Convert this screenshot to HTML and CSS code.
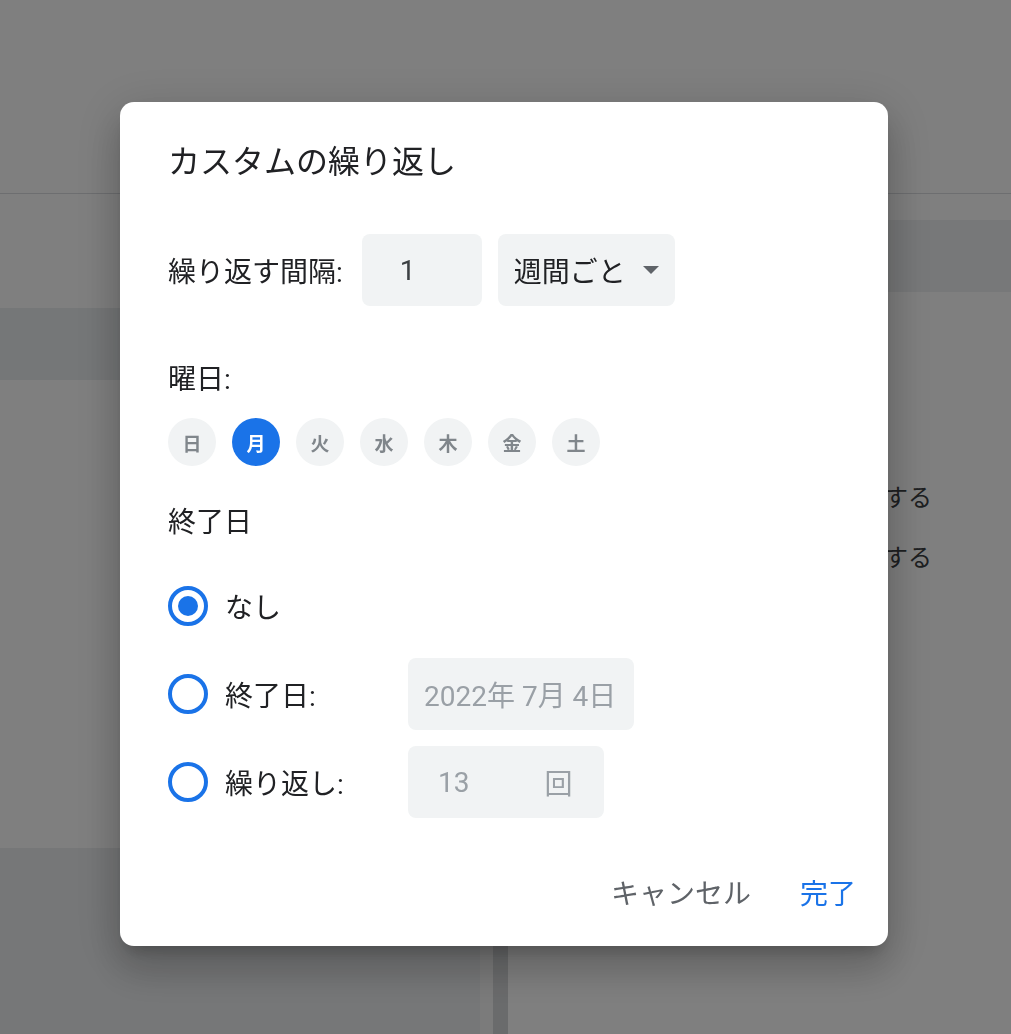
FILE: index.html
```html
<!DOCTYPE html>
<html lang="ja">
<head>
<meta charset="utf-8">
<title>カスタムの繰り返し</title>
<link rel="stylesheet" href="styles.css">
</head>
<body>
<div class="page">
  <header class="topbar"></header>
  <div class="main">
    <div class="left">
      <div class="left-band"></div>
      <div class="left-block"></div>
    </div>
    <div class="track-light"></div>
    <div class="track-dark"></div>
    <div class="right">
      <div class="right-band"></div>
      <div class="right-rows">
        <div class="right-row">予定を通知する</div>
        <div class="right-row">メールで通知する</div>
      </div>
    </div>
  </div>
</div>

<div class="scrim">
  <div class="dialog" role="dialog" aria-label="カスタムの繰り返し">
    <h2 class="title">カスタムの繰り返し</h2>

    <div class="interval">
      <span class="label">繰り返す間隔:</span>
      <div class="field num">1</div>
      <div class="field select">
        <span>週間ごと</span>
        <svg class="caret" width="16" height="8" viewBox="0 0 16 8"><path d="M0 0h16L8 8z" fill="#5f6368"/></svg>
      </div>
    </div>

    <div class="section-label week-label">曜日:</div>
    <div class="days">
      <span class="day">日</span>
      <span class="day on">月</span>
      <span class="day">火</span>
      <span class="day">水</span>
      <span class="day">木</span>
      <span class="day">金</span>
      <span class="day">土</span>
    </div>

    <div class="section-label end-label">終了日</div>
    <div class="options">
      <div class="option">
        <span class="radio checked"></span>
        <span class="opt-label">なし</span>
      </div>
      <div class="option">
        <span class="radio"></span>
        <span class="opt-label">終了日:</span>
        <div class="field date">2022年 7月 4日</div>
      </div>
      <div class="option">
        <span class="radio"></span>
        <span class="opt-label">繰り返し:</span>
        <div class="field count"><span>13</span><span class="unit">回</span></div>
      </div>
    </div>

    <div class="actions">
      <button class="btn cancel">キャンセル</button>
      <button class="btn done">完了</button>
    </div>
  </div>
</div>
</body>
</html>
```
FILE: styles.css
```css
* { box-sizing: border-box; }
html, body {
  margin: 0;
  padding: 0;
  height: 100%;
}
body {
  font-family: Roboto, "Noto Sans CJK JP", sans-serif;
  background: #fff;
  overflow: hidden;
  color: #202124;
}

/* background page */
.page {
  height: 1034px;
  display: flex;
  flex-direction: column;
}
.topbar {
  height: 194px;
  border-bottom: 1px solid #dadce0;
  flex: none;
}
.main {
  flex: 1;
  display: flex;
}
.left {
  width: 480px;
  display: flex;
  flex-direction: column;
}
.left-band {
  margin-top: 114px;
  height: 72px;
  background: #ebeef0;
}
.left-block {
  margin-top: 468px;
  flex: 1;
  background: #eceef0;
}
.track-light {
  width: 13px;
  background: #f6f6f6;
}
.track-dark {
  width: 15px;
  background: #d5d7d9;
}
.right {
  flex: 1;
  display: flex;
  flex-direction: column;
}
.right-band {
  margin-top: 26px;
  height: 72px;
  background: #eef0f2;
}
.right-rows {
  margin-top: 188px;
  display: flex;
  flex-direction: column;
  gap: 24px;
}
.right-row {
  width: 424px;
  text-align: right;
  font-size: 24px;
  line-height: 36px;
  color: #3c4043;
}

/* overlay & dialog */
.scrim {
  position: fixed;
  inset: 0;
  background: rgba(0, 0, 0, 0.5);
  display: flex;
  align-items: flex-start;
  padding: 102px 0 0 120px;
}
.dialog {
  width: 768px;
  height: 844px;
  background: #fff;
  border-radius: 14px;
  box-shadow: 0 24px 38px 3px rgba(0,0,0,.14), 0 9px 46px 8px rgba(0,0,0,.12), 0 11px 15px -7px rgba(0,0,0,.2);
  padding: 40px 32px 30px 48px;
  display: flex;
  flex-direction: column;
}
.title {
  margin: 0;
  font-size: 32px;
  line-height: 40px;
  font-weight: 400;
  color: #202124;
}
.interval {
  margin-top: 52px;
  display: flex;
  align-items: center;
}
.label {
  font-size: 28px;
  color: #202124;
  margin-right: 19px;
}
.field {
  height: 72px;
  border-radius: 8px;
  background: #f1f3f4;
  font-size: 28px;
  display: flex;
  align-items: center;
  color: #3c4043;
}
.num {
  width: 120px;
  padding-left: 38px;
  margin-right: 16px;
}
.select {
  width: 177px;
  padding: 0 16px;
  color: #202124;
}
.caret { margin-left: auto; }

.section-label {
  font-size: 28px;
  line-height: 40px;
  color: #202124;
}
.week-label { margin-top: 54px; }
.days {
  margin-top: 18px;
  display: flex;
  gap: 16px;
}
.day {
  width: 48px;
  height: 48px;
  border-radius: 50%;
  background: #f1f3f4;
  color: #80868b;
  font-size: 19px;
  font-weight: 700;
  display: flex;
  align-items: center;
  justify-content: center;
}
.day.on {
  background: #1a73e8;
  color: #fff;
}
.end-label { margin-top: 37px; }
.options {
  margin-top: 27px;
  display: flex;
  flex-direction: column;
  gap: 16px;
}
.option {
  height: 72px;
  display: flex;
  align-items: center;
}
.radio {
  width: 40px;
  height: 40px;
  border: 4px solid #1a73e8;
  border-radius: 50%;
  margin-right: 17px;
  display: flex;
  align-items: center;
  justify-content: center;
  flex: none;
}
.radio.checked::after {
  content: "";
  width: 20px;
  height: 20px;
  border-radius: 50%;
  background: #1a73e8;
}
.opt-label {
  width: 183px;
  font-size: 28px;
  color: #202124;
}
.date {
  width: 226px;
  padding-left: 16px;
  color: #9aa0a6;
}
.count {
  width: 196px;
  padding-left: 30px;
  color: #9aa0a6;
}
.unit { margin-left: 75px; }

.actions {
  margin-top: auto;
  height: 48px;
  display: flex;
  align-items: center;
  justify-content: flex-end;
  gap: 49px;
}
.btn {
  border: 0;
  background: none;
  padding: 0;
  font-family: inherit;
  font-size: 28px;
  cursor: pointer;
}
.cancel { color: #5f6368; }
.done { color: #1a73e8; }
```
